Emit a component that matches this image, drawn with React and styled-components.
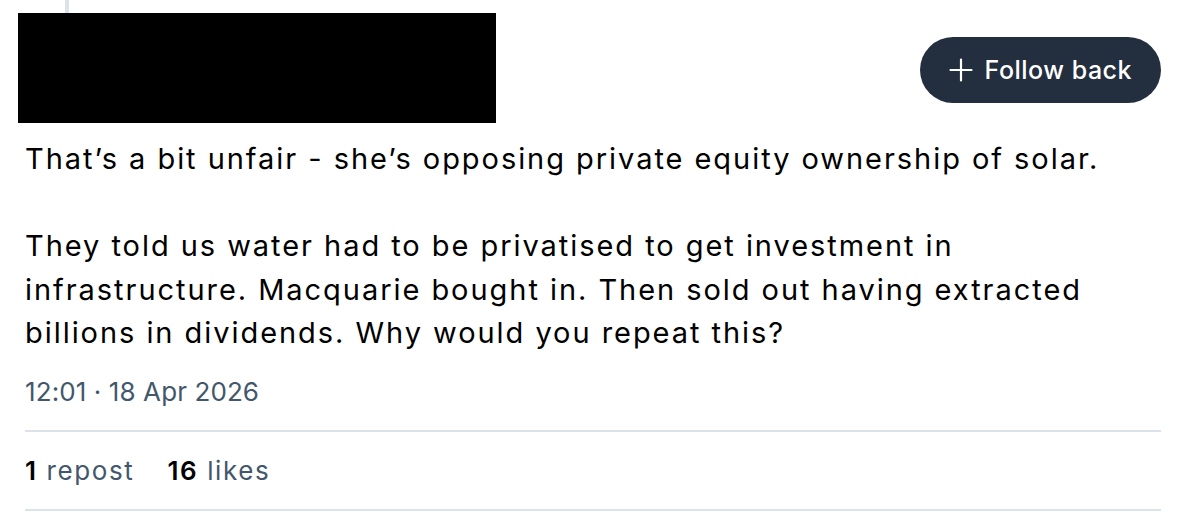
import React from "react";
import styled, { createGlobalStyle } from "styled-components";

const Global = createGlobalStyle`
  html, body { margin: 0; padding: 0; background: #ffffff; }
  body { font-family: Inter, "Noto Sans", sans-serif; -webkit-font-smoothing: antialiased; }
`;

const Page = styled.div`
  width: 1184px;
  height: 512px;
  overflow: hidden;
  position: relative;
  background: #fff;
`;

const ThreadLine = styled.div`
  position: absolute;
  left: 65px;
  top: 0;
  width: 4px;
  height: 13px;
  background: #dce2ea;
`;

const Post = styled.article`
  padding: 13px 23px 0 25px;
  display: flex;
  flex-direction: column;
`;

const Header = styled.header`
  display: flex;
  align-items: center;
  justify-content: space-between;
  height: 110px;
`;

const Redacted = styled.div`
  width: 478px;
  height: 110px;
  margin-left: -7px;
  background: #000;
`;

const FollowButton = styled.button`
  display: inline-flex;
  align-items: center;
  gap: 12px;
  height: 66px;
  padding: 0 29px;
  margin-top: 4px;
  border: none;
  border-radius: 33px;
  background: #232e3f;
  color: #fff;
  font-family: Inter, sans-serif;
  font-size: 25px;
  font-weight: 500;
  letter-spacing: 0.5px;
  cursor: pointer;
`;

const Body = styled.p`
  margin: 14px 0 0 0;
  font-size: 29px;
  line-height: 43.5px;
  color: #000;
  white-space: pre-wrap;
  letter-spacing: 1.95px;
`;

const Timestamp = styled.div`
  margin-top: 20px;
  font-size: 26px;
  line-height: 34px;
  letter-spacing: 0.1px;
  color: #42576c;
`;

const Divider = styled.hr`
  margin: ${(p) => p.$top}px 0 0 0;
  border: none;
  height: 2px;
  background: #dce2ea;
`;

const Stats = styled.div`
  display: flex;
  gap: 33px;
  height: 77px;
  align-items: center;
  font-size: 26px;
  letter-spacing: 1.6px;
`;

const Stat = styled.span`
  color: #42576c;
  b {
    color: #000;
    font-weight: 600;
  }
`;

const Plus = () => (
  <svg width="24" height="24" viewBox="0 0 24 24" fill="none" stroke="#fff" strokeWidth="2.2" strokeLinecap="round">
    <path d="M12 1.5v21M1.5 12h21" />
  </svg>
);

export default function App() {
  return (
    <Page>
      <Global />
      <ThreadLine />
      <Post>
        <Header>
          <Redacted />
          <FollowButton>
            <Plus />
            Follow back
          </FollowButton>
        </Header>
        <Body>
          {"That’s a bit unfair - she’s opposing private equity ownership of solar.\n\nThey told us water had to be privatised to get investment in infrastructure. Macquarie bought in. Then sold out having extracted billions in dividends. Why would you repeat this?"}
        </Body>
        <Timestamp>12:01 · 18 Apr 2026</Timestamp>
        <Divider $top={21} />
        <Stats>
          <Stat>
            <b>1</b> repost
          </Stat>
          <Stat>
            <b>16</b> likes
          </Stat>
        </Stats>
        <Divider $top={0} />
      </Post>
    </Page>
  );
}
